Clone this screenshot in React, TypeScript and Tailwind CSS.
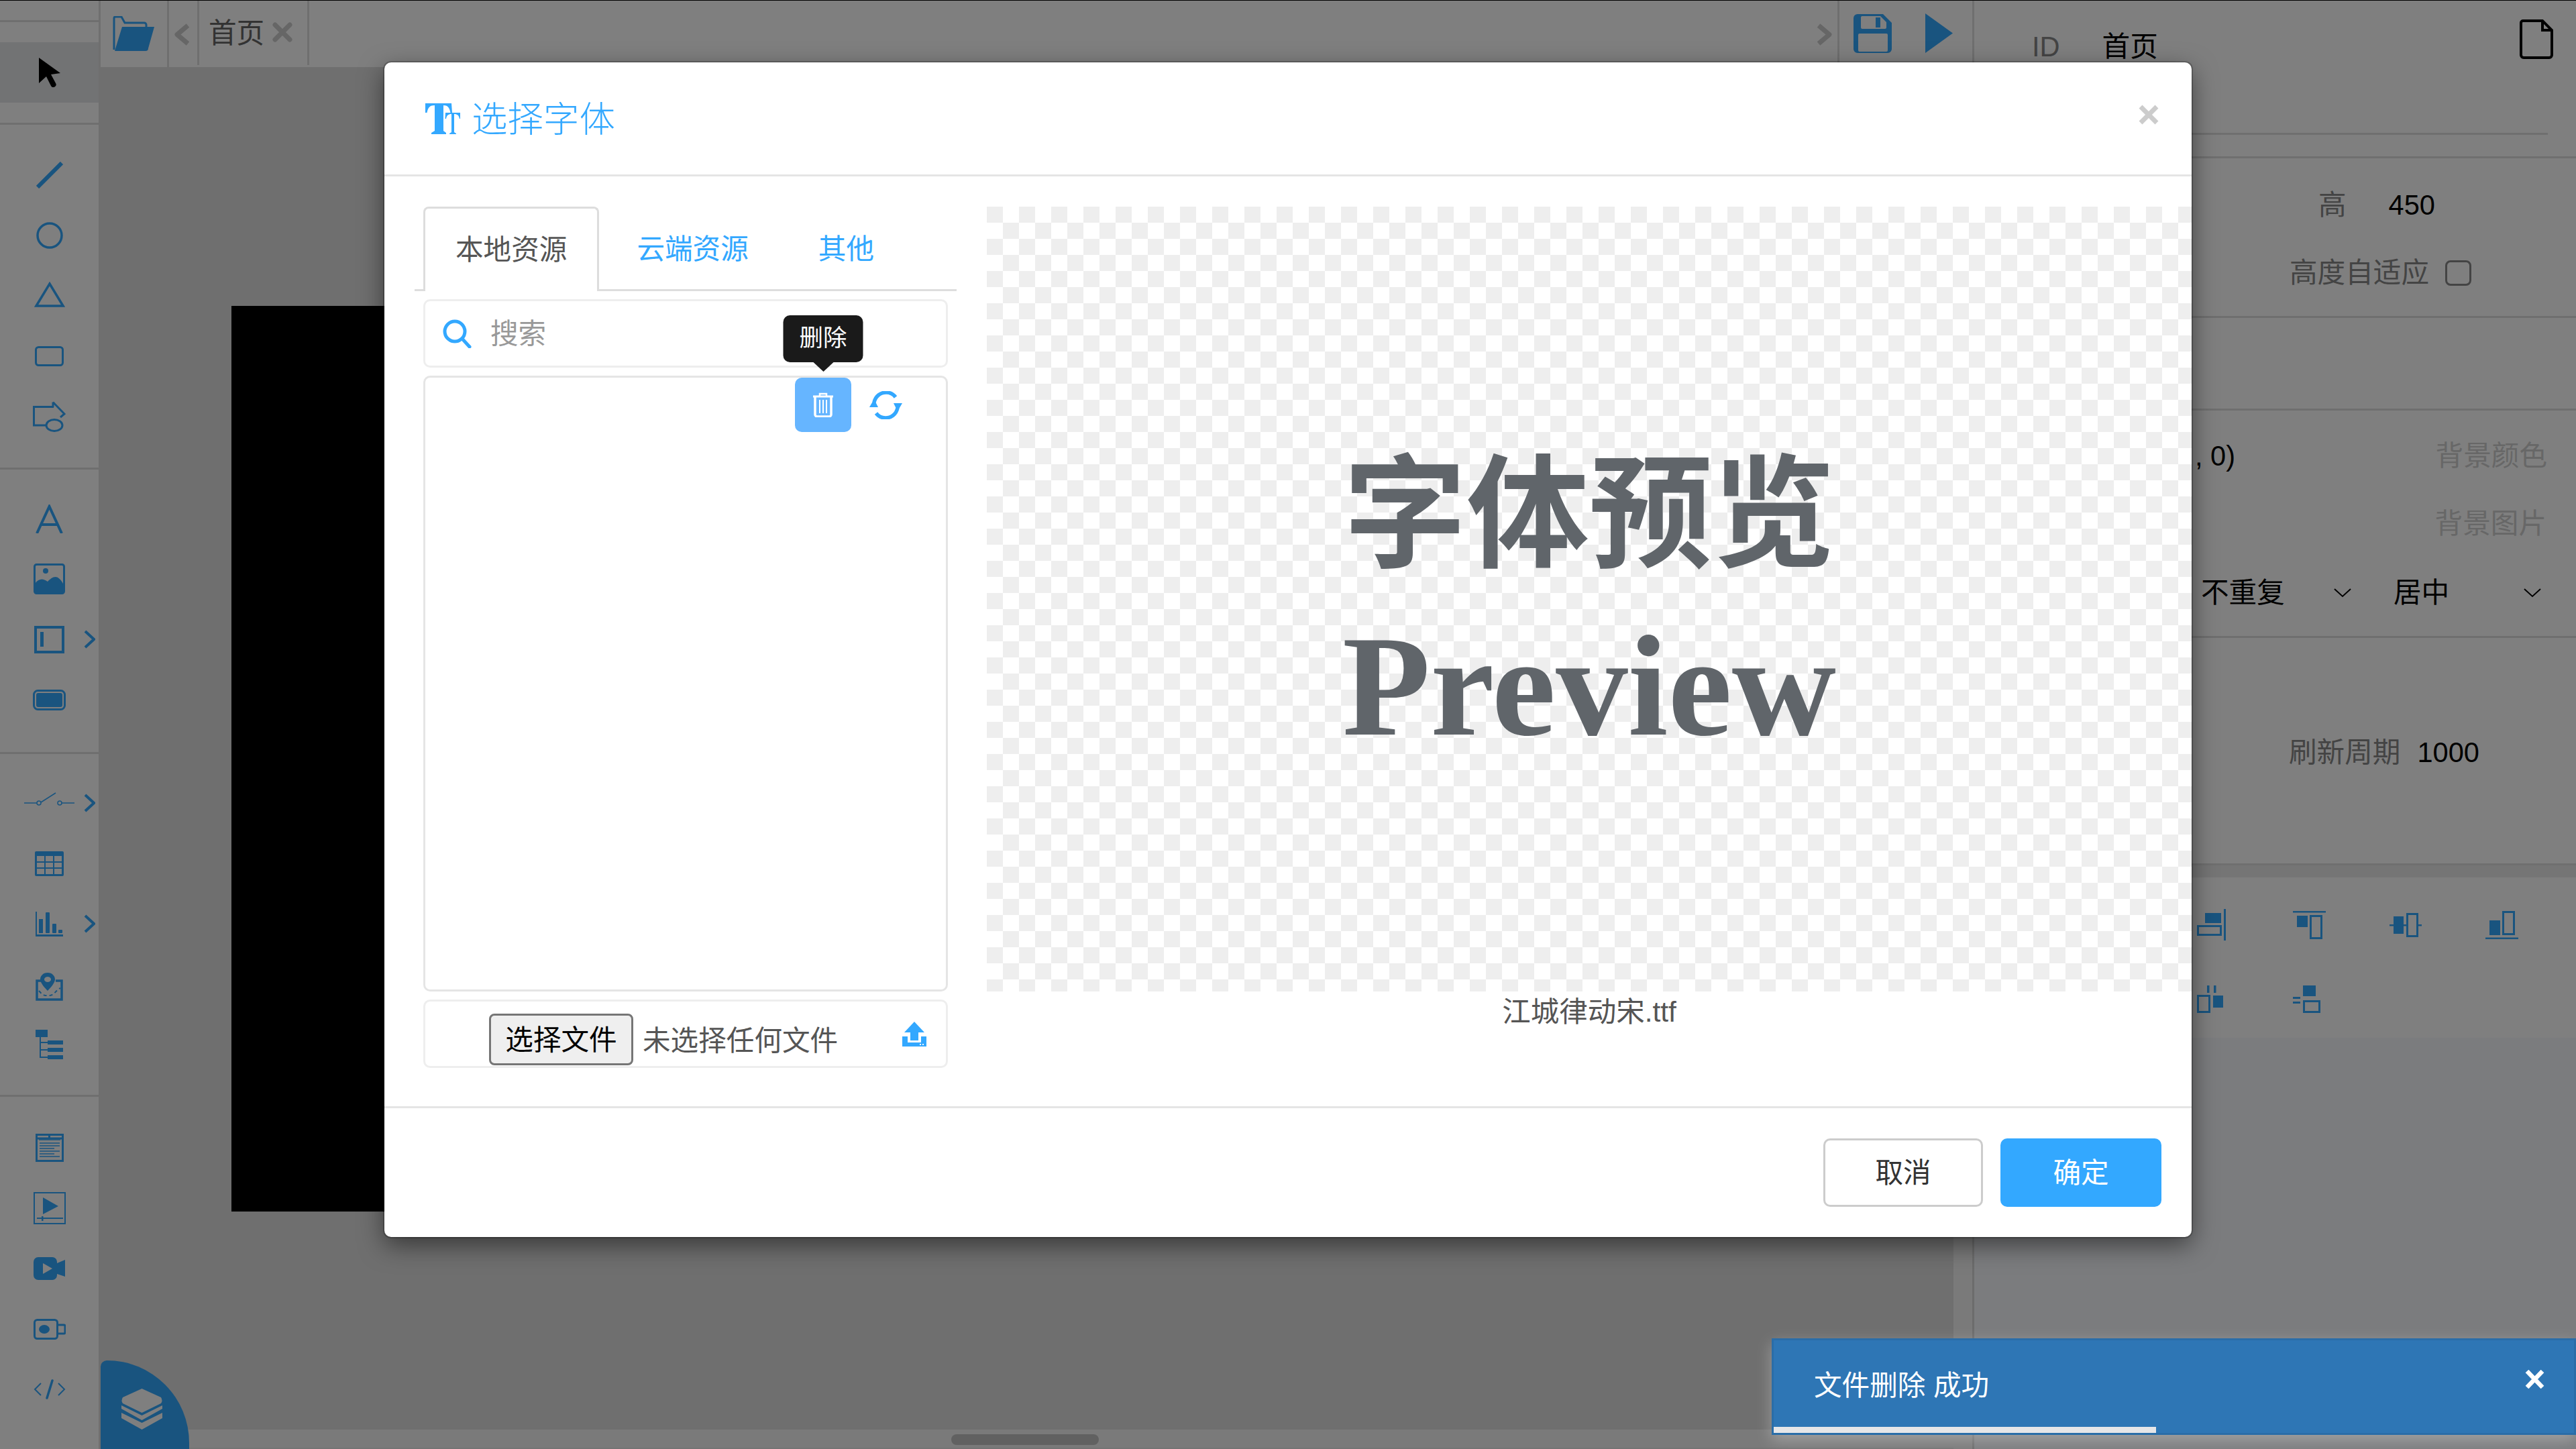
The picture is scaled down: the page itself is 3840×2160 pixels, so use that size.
import React from "react";

const B = "#33a8ff";
const FONT = '"Liberation Sans","Noto Sans CJK SC",sans-serif';

function Chevron() {
  return (
    <svg width="17" height="28" viewBox="0 0 17 28" fill="none" stroke={B} strokeWidth="4">
      <path d="M2 2 L15 14 L2 26" />
    </svg>
  );
}

function Row({ icon, more }: { icon: React.ReactNode; more?: boolean }) {
  return (
    <div className="grid h-[90px] grid-cols-[1fr_auto_1fr] items-center">
      <div />
      <div className="flex items-center justify-center">{icon}</div>
      <div className="flex justify-end pr-[5px]">{more ? <Chevron /> : null}</div>
    </div>
  );
}

const s2 = [
  <svg key="l" width="40" height="40" viewBox="0 0 40 40" fill="none" stroke={B} strokeWidth="6"><path d="M2 38 L38 2" /></svg>,
  <svg key="c" width="40" height="40" viewBox="0 0 40 40" fill="none" stroke={B} strokeWidth="3.5"><circle cx="20" cy="20" r="18" /></svg>,
  <svg key="t" className="mb-[4px]" width="46" height="38" viewBox="0 0 46 38" fill="none" stroke={B} strokeWidth="3.5"><path d="M23 3 L43 36 H3 Z" /></svg>,
  <svg key="r" width="43" height="30" viewBox="0 0 43 30" fill="none" stroke={B} strokeWidth="3"><rect x="1.5" y="1.5" width="40" height="27" rx="4" /></svg>,
  <svg key="s" width="49" height="46" viewBox="0 0 49 46" fill="none" stroke={B} strokeWidth="3">
    <path d="M31 8.5 H1.5 V36 H20" />
    <path d="M30 1.5 L47 19 L41 24 M30 1.5 V9" />
    <ellipse cx="32" cy="36" rx="12" ry="8.5" />
  </svg>,
];

const s3: [React.ReactNode, boolean?][] = [
  [<svg width="41" height="43" viewBox="0 0 41 43" fill="none" stroke={B} strokeWidth="4"><path d="M2 43 L20.5 3 L39 43 M8 30 H33" /></svg>],
  [<svg width="47" height="46" viewBox="0 0 47 46" fill="none">
    <rect x="1.5" y="1.5" width="44" height="43" rx="3" stroke={B} strokeWidth="3" />
    <circle cx="18" cy="11" r="4" fill={B} />
    <path d="M2 30 C8 22 14 22 21 27 C28 20 36 14 45 32 V44 H2 Z" fill={B} />
  </svg>],
  [<svg width="45" height="41" viewBox="0 0 45 41" fill="none">
    <rect x="2" y="2" width="41" height="37" stroke={B} strokeWidth="4" />
    <rect x="9" y="9" width="5" height="22" fill={B} />
  </svg>, true],
  [<svg width="49" height="31" viewBox="0 0 49 31" fill="none">
    <rect x="1.5" y="1.5" width="46" height="28" rx="6" stroke={B} strokeWidth="3" />
    <rect x="5" y="5" width="39" height="21" rx="3" fill={B} />
  </svg>],
];

const s4: [React.ReactNode, boolean?][] = [
  [<svg className="mb-[10px]" width="75" height="22" viewBox="0 0 75 22" fill="none" stroke={B} strokeWidth="1.5">
    <path d="M0 16 H19 M25 15 L47 1 M56 16 H75" />
    <circle cx="22" cy="16" r="3" />
    <circle cx="53" cy="16" r="3" />
  </svg>, true],
  [<svg width="43" height="37" viewBox="0 0 43 37">
    <path fillRule="evenodd" fill={B} d="M2 0 H41 a2 2 0 0 1 2 2 V35 a2 2 0 0 1-2 2 H2 a2 2 0 0 1-2-2 V2 a2 2 0 0 1 2-2 Z M3 7 V15 H14 V7 Z M16 7 V15 H27 V7 Z M29 7 V15 H40 V7 Z M3 17 V24 H14 V17 Z M16 17 V24 H27 V17 Z M29 17 V24 H40 V17 Z M3 26 V34 H14 V26 Z M16 26 V34 H27 V26 Z M29 26 V34 H40 V26 Z" />
  </svg>],
  [<svg width="41" height="37" viewBox="0 0 41 37" fill={B}>
    <path d="M0 0 H2 V34 H41 V37 H0 Z" />
    <rect x="5" y="11" width="6" height="21" />
    <rect x="15" y="1" width="6" height="31" rx="1" />
    <rect x="25" y="18" width="6" height="14" rx="1" />
    <rect x="34" y="27" width="6" height="5" rx="1" />
  </svg>, true],
  [<svg className="mt-[8px]" width="41" height="42" viewBox="0 0 41 42" fill="none">
    <path d="M11 12 H2 V40 H39 V12 H30" stroke={B} strokeWidth="3.5" />
    <path fillRule="evenodd" fill={B} d="M18 0 C25 0 29 5 29 10 C29 15 22 23 18 27 C14 23 7 15 7 10 C7 5 11 0 18 0 Z M18 6 a5 4 0 1 0 .01 0 Z" />
    <path d="M5 27 C12 35 14 34 20 34 C28 34 30 26 37 23" stroke={B} strokeWidth="2" strokeDasharray="5 4" />
  </svg>],
  [<svg width="41" height="44" viewBox="0 0 41 44" fill={B}>
    <rect x="0" y="0" width="18" height="11" />
    <rect x="18" y="16" width="23" height="6" />
    <rect x="18" y="27" width="23" height="6" />
    <rect x="18" y="38" width="23" height="6" />
    <path d="M6 11 H8 V18 H18 V20 H8 V29 H18 V31 H8 V40 H18 V42 H6 Z" />
  </svg>],
];

const s5: React.ReactNode[] = [
  <svg width="42" height="42" viewBox="0 0 42 42" fill="none">
    <rect x="1.5" y="1.5" width="39" height="39" stroke={B} strokeWidth="3" />
    <path d="M3 7 H39 M20.5 2 V8" stroke={B} strokeWidth="3" />
    <path d="M5 9 H37 M6 14 H36 M6 18 H36 M6 22 H28 M6 26 H36 M6 30 H28 M6 34 H36" stroke={B} strokeWidth="1.5" />
  </svg>,
  <svg width="48" height="48" viewBox="0 0 48 48" fill="none">
    <rect x="1" y="1" width="46" height="46" stroke={B} strokeWidth="2" />
    <path d="M14 8 L37 21 L14 33 Z" fill={B} />
    <path d="M5 39 H44" stroke={B} strokeWidth="2" />
    <rect x="12" y="36" width="2.5" height="7" fill={B} />
  </svg>,
  <svg width="47" height="34" viewBox="0 0 47 34">
    <path fillRule="evenodd" fill={B} d="M7 0 H28 a7 7 0 0 1 7 7 V9 L47 4 V29 L35 25 V27 a7 7 0 0 1-7 7 H7 a7 7 0 0 1-7-7 V7 a7 7 0 0 1 7-7 Z M14 9 V25 L28 17 Z" />
  </svg>,
  <svg width="48" height="31" viewBox="0 0 48 31" fill="none">
    <rect x="1.5" y="1.5" width="34" height="28" rx="4" stroke={B} strokeWidth="3" />
    <ellipse cx="16" cy="15.5" rx="8" ry="6.5" fill={B} />
    <path d="M36 9 H45 a2 2 0 0 1 2 2 V20 a2 2 0 0 1-2 2 H36" stroke={B} strokeWidth="3" />
  </svg>,
  <svg width="48" height="30" viewBox="0 0 48 30" fill="none" stroke={B}>
    <path d="M11 6 L2 15 L11 24 M37 6 L46 15 L37 24" strokeWidth="2" />
    <path d="M28 2 L20 28" strokeWidth="3.5" strokeLinecap="round" />
  </svg>,
];

function Sidebar() {
  const line = "h-[3px] bg-[#dedede]";
  return (
    <aside className="flex h-full w-[150px] shrink-0 flex-col border-r-[3px] border-[#dedede] bg-white">
      <div className="h-[29px]" />
      <div className={line} />
      <div className="h-[30px]" />
      <div className="flex h-[90px] items-center justify-center bg-[#e4e6e8]">
        <svg width="32" height="44" viewBox="0 0 32 44" fill="#000">
          <path d="M0 0 L32 23 L18 25 L25 38 a4 4 0 0 1-7 4 L11 28 L0 38 Z" />
        </svg>
      </div>
      <div className="h-[30px]" />
      <div className={line} />
      <div className="h-[30px]" />
      {s2.map((ic, i) => <Row key={i} icon={ic} />)}
      <div className="h-[31px]" />
      <div className={line} />
      <div className="h-[28px]" />
      {s3.map((r, i) => <Row key={i} icon={r[0]} more={r[1]} />)}
      <div className="h-[33px]" />
      <div className={line} />
      <div className="h-[28px]" />
      {s4.map((r, i) => <Row key={i} icon={r[0]} more={r[1]} />)}
      <div className="h-[30px]" />
      <div className={line} />
      <div className="h-[31px]" />
      {s5.map((ic, i) => <Row key={i} icon={ic} />)}
    </aside>
  );
}

function TabBar() {
  return (
    <div className="flex h-[99px] shrink-0 items-start bg-white">
      <div className="flex h-[99px] w-[102px] items-start justify-start border-r-[3px] border-[#dedede] pl-[18px] pt-[23px]">
        <svg width="62" height="52" viewBox="0 0 62 52" fill="none">
          <path d="M2 50 V3 a2 2 0 0 1 2-2 H13 l5 9 H47 a3 3 0 0 1 3 3 V16" stroke={B} strokeWidth="3" />
          <path d="M14 16 H62 L53 48 a4 4 0 0 1-4 4 H3 Z" fill={B} />
        </svg>
      </div>
      <div className="flex h-[96px] w-[45px] items-start border-r-[3px] border-[#dedede] pl-[7px] pt-[34px]">
        <svg width="24" height="33" viewBox="0 0 24 33" fill="none" stroke="#ccc" strokeWidth="7" strokeLinejoin="round">
          <path d="M21 3 L5 16.5 L21 30" />
        </svg>
      </div>
      <div className="flex h-[96px] w-[164px] items-start border-r-[3px] border-[#dedede] pl-[14px] pt-[26px]">
        <span className="text-[41.6px] leading-[46px] text-[#666]">首页</span>
        <svg className="ml-[12px] mt-[6px]" width="30" height="30" viewBox="0 0 30 30" fill="none" stroke="#ccc" strokeWidth="7" strokeLinecap="round">
          <path d="M4 4 L26 26 M26 4 L4 26" />
        </svg>
      </div>
      <div className="flex-1" />
      <div className="flex h-[92px] w-[42px] items-start border-r-[3px] border-[#dedede] pl-[0px] pt-[34px]">
        <svg className="ml-[8px]" width="24" height="33" viewBox="0 0 24 33" fill="none" stroke="#ccc" strokeWidth="7" strokeLinejoin="round">
          <path d="M3 3 L19 16.5 L3 30" />
        </svg>
      </div>
      <div className="flex h-[92px] w-[201px] items-start border-r-[3px] border-[#dedede] pl-[21px] pt-[19px]">
        <svg className="mt-[1px]" width="57" height="58" viewBox="0 0 57 58">
          <path fillRule="evenodd" fill={B} d="M6 0 H44 L57 13 V52 a6 6 0 0 1-6 6 H6 a6 6 0 0 1-6-6 V6 a6 6 0 0 1 6-6 Z M13 3 a2 2 0 0 0-2 2 V20 a2 2 0 0 0 2 2 H47 a2 2 0 0 0 2-2 V12 L40 3 Z M33 5 H40 V20 H33 Z M9 29 a2 2 0 0 0-2 2 V54 a2 2 0 0 0 2 2 H49 a2 2 0 0 0 2-2 V31 a2 2 0 0 0-2-2 Z" />
        </svg>
        <svg className="ml-[50px]" width="41" height="59" viewBox="0 0 41 59" fill={B}>
          <path d="M0 0 L41 29.5 L0 59 Z" />
        </svg>
      </div>
    </div>
  );
}

function Canvas() {
  return (
    <div className="flex min-h-0 flex-1">
      <div className="relative flex min-w-0 flex-1 flex-col bg-[#dfdfdf]">
        <div className="relative min-h-0 flex-1 pl-[195px] pt-[356px]">
          <div className="h-[1350px] w-[1350px] bg-black" />
        </div>
        <div className="flex h-[29px] shrink-0 items-start border-b-[2px] border-[#e8e8e8] bg-[#f5f5f5] pl-[1268px] pt-[7px]">
          <div className="h-[16px] w-[220px] rounded-full bg-[#c2c2c2]" />
        </div>
        <div className="absolute bottom-0 left-0 flex h-[132px] w-[132px] items-end justify-start rounded-tl-[10px] rounded-tr-[100%] bg-[#33a8ff] pb-[29px] pl-[30px]">
          <svg width="63" height="61" viewBox="0 0 63 61" fill="#fff">
            <path d="M31.5 0 L60 13 Q63 18 60 22 L31.5 36 L3 22 Q0 18 3 13 Z" />
            <path d="M1 25 L31.5 40 L62 25 V30 L31.5 47 L1 30 Z" />
            <path d="M1 36 L31.5 51 L62 36 V44 L31.5 61 L1 44 Z" />
          </svg>
        </div>
      </div>
      <div className="w-[31px] shrink-0 border-r-[3px] border-[#d8d8d8] bg-[#f5f5f5]" />
    </div>
  );
}

function Value({ children }: { children: React.ReactNode }) {
  return <span className="text-[41.6px] leading-[42px] text-black">{children}</span>;
}
function Label({ children, soft }: { children: React.ReactNode; soft?: boolean }) {
  return <span className={`text-[41.6px] leading-[42px] ${soft ? "text-[#cfcfcf]" : "text-[#888]"}`}>{children}</span>;
}

function SelectChevron() {
  return (
    <svg width="26" height="14" viewBox="0 0 26 14" fill="none" stroke="#000" strokeWidth="2">
      <path d="M1 1 L13 12 L25 1" />
    </svg>
  );
}

const alignIcons: React.ReactNode[] = [
  <svg width="43" height="47" viewBox="0 0 43 47" fill={B}>
    <rect x="40" y="0" width="3" height="47" />
    <rect x="12" y="6" width="24" height="15" />
    <rect x="1.5" y="25.5" width="34" height="13" fill="none" stroke={B} strokeWidth="3" />
  </svg>,
  <svg width="49" height="42" viewBox="0 0 49 42" fill={B}>
    <rect x="0" y="0" width="49" height="2.5" />
    <rect x="6" y="7" width="16" height="17" />
    <rect x="26.5" y="7.5" width="16" height="33" fill="none" stroke={B} strokeWidth="3" />
  </svg>,
  <svg width="48" height="36" viewBox="0 0 48 36" fill={B}>
    <rect x="0" y="17" width="6" height="2.5" />
    <rect x="42" y="17" width="6" height="2.5" />
    <rect x="21" y="17" width="5" height="2.5" />
    <rect x="6" y="5" width="15" height="26" />
    <rect x="26.5" y="1.5" width="15" height="33" fill="none" stroke={B} strokeWidth="3" />
  </svg>,
  <svg width="49" height="42" viewBox="0 0 49 42" fill={B}>
    <rect x="0" y="39.5" width="49" height="2.5" />
    <rect x="6" y="14" width="16" height="22" />
    <rect x="26.5" y="1.5" width="16" height="33" fill="none" stroke={B} strokeWidth="3" />
  </svg>,
  <svg width="39" height="41" viewBox="0 0 39 41" fill={B}>
    <rect x="1.5" y="15.5" width="17" height="24" fill="none" stroke={B} strokeWidth="3" />
    <rect x="15" y="0" width="3.5" height="11" />
    <rect x="25" y="0" width="3.5" height="11" />
    <rect x="24" y="15" width="15" height="18" />
  </svg>,
  <svg width="41" height="41" viewBox="0 0 41 41" fill={B}>
    <rect x="0" y="17" width="11" height="3" />
    <rect x="0" y="24" width="11" height="3" />
    <rect x="15" y="0" width="19" height="16" />
    <rect x="16.5" y="23.5" width="23" height="16" fill="none" stroke={B} strokeWidth="3" />
  </svg>,
];

function RightPanel() {
  return (
    <aside className="flex h-full min-w-0 flex-1 flex-col bg-[#f6f8fc]">
      <section className="h-[235px] border-b-[3px] border-[#dedede] bg-white">
        <div className="flex items-start pl-[86px] pr-[34px] pt-[28px]">
          <span className="mt-[20px]"><Label>ID</Label></span>
          <span className="ml-[63px] mt-[20px]"><Value>首页</Value></span>
          <svg className="ml-auto" width="50" height="59" viewBox="0 0 50 59" fill="none" stroke="#000" strokeWidth="4">
            <path d="M5 2 H34 L48 16 V53 a4 4 0 0 1-4 4 H6 a4 4 0 0 1-4-4 V5 a3 3 0 0 1 3-3 Z M34 2 V16 H48" />
          </svg>
        </div>
        <div className="ml-[0px] mr-[42px] mt-[107px] h-[3px] bg-[#dedede]" />
      </section>
      <section className="h-[238px] border-b-[3px] border-[#dedede] bg-white pt-[49px]">
        <div className="flex items-center pl-[513px]">
          <Label>高</Label>
          <span className="ml-[63px]"><Value>450</Value></span>
        </div>
        <div className="mt-[59px] flex items-center pl-[470px]">
          <Label>高度自适应</Label>
          <span className="ml-[24px] block h-[38px] w-[39px] rounded-[8px] border-[3px] border-[#888]" />
        </div>
      </section>
      <section className="h-[138px] border-b-[3px] border-[#dedede] bg-white" />
      <section className="h-[339px] border-b-[3px] border-[#dedede] bg-white pt-[47px]">
        <div className="flex items-center justify-between pl-[329px] pr-[43px]">
          <Value>, 0)</Value>
          <Label soft>背景颜色</Label>
        </div>
        <div className="mt-[59px] flex justify-end pr-[44px]">
          <Label soft>背景图片</Label>
        </div>
        <div className="mt-[61px] flex items-center pl-[338px]">
          <span className="w-[198px]"><Value>不重复</Value></span>
          <SelectChevron />
          <span className="ml-[63px] w-[194px]"><Value>居中</Value></span>
          <SelectChevron />
        </div>
      </section>
      <section className="flex h-[339px] items-start border-b-[3px] border-[#dedede] bg-white pl-[469px] pt-[150px]">
        <Label>刷新周期</Label>
        <span className="ml-[25px]"><Value>1000</Value></span>
      </section>
      <div className="h-[18px] bg-[#eaeaea]" />
      <section className="h-[239px] bg-white pl-[332px] pt-[47px]">
        <div className="grid grid-cols-[143px_144px_143px_60px] items-center">
          {alignIcons.slice(0, 4).map((ic, i) => <div key={i}>{ic}</div>)}
        </div>
        <div className="mt-[67px] grid grid-cols-[143px_60px] items-center">
          {alignIcons.slice(4).map((ic, i) => <div key={i}>{ic}</div>)}
        </div>
      </section>
    </aside>
  );
}

function Modal() {
  return (
    <div className="h-[1751px] w-[2694px] overflow-hidden rounded-[10px] bg-white shadow-[0_0_0_2px_rgba(0,0,0,0.2),0_12px_37px_rgba(0,0,0,0.5)]">
      <header className="flex h-[170px] items-center justify-between border-b-[3px] border-[#e5e5e5] pl-[61px] pr-[49px]">
        <div className="flex items-center">
          <svg width="52" height="46" viewBox="0 0 52 46" fill={B}>
            <path d="M0 0 H39 L40 14 H37.5 C36 6 33 3 27 3 V41 L31 44 V46 H9 V44 L14 41 V3 C7 3 4 6 2.5 14 H0 Z" />
            <path d="M30 14 H52 L52.5 23 H51 C50 18 48 16 43 16 V43 L46 45 V46 H36 V45 L39 43 V16 C34 16 32 18 31 23 H29.5 Z" />
          </svg>
          <h1 className="ml-[17px] pt-[4px] text-[53.5px] font-light leading-[60px] text-[#33a8ff]">选择字体</h1>
        </div>
        <svg className="-mt-[12px]" width="30" height="30" viewBox="0 0 30 30" fill="none" stroke="#ccc" strokeWidth="7">
          <path d="M3 3 L27 27 M27 3 L3 27" />
        </svg>
      </header>

      <div className="flex h-[1389px] border-b-[3px] border-[#e5e5e5] pt-[45px]">
        <div className="ml-[45px] w-[808px] shrink-0">
          <div className="flex h-[126px] items-end gap-[8px] border-b-[3px] border-[#ddd] pl-[13px]">
            <div className="-mb-[3px] flex h-[126px] items-center rounded-t-[8px] border-[3px] border-b-0 border-[#ddd] bg-white px-[45px] pt-[2px] text-[41.6px] text-[#555]">本地资源</div>
            <div className="flex h-[123px] items-center px-[48px] pt-[5px] text-[41.6px] text-[#33a8ff]">云端资源</div>
            <div className="flex h-[123px] items-center px-[48px] pt-[5px] text-[41.6px] text-[#33a8ff]">其他</div>
          </div>

          <div className="ml-[13px] mt-[12px] flex h-[102px] w-[782px] items-center rounded-[10px] border-[3px] border-[#eee] pl-[26px]">
            <svg width="43" height="43" viewBox="0 0 43 43" fill="none" stroke={B} strokeWidth="5">
              <circle cx="18" cy="18" r="15" />
              <path d="M29 29 L40 41" strokeLinecap="round" />
            </svg>
            <span className="ml-[28px] pt-[2px] text-[41.6px] leading-[42px] text-[#999]">搜索</span>
          </div>

          <div className="ml-[13px] mt-[12px] flex h-[918px] w-[782px] items-start justify-end rounded-[10px] border-[3px] border-[#e5e5e5] pr-[65px]">
            <div className="relative flex h-[81px] w-[84px] items-center justify-center rounded-[10px] bg-[#66b5ff]">
              <svg width="32" height="37" viewBox="0 0 32 37" fill="none" stroke="#fff">
                <path d="M1 6 H31" strokeWidth="3" />
                <path d="M11 5 V2 H21 V5" strokeWidth="2.5" />
                <path d="M4 7 V33 a3 3 0 0 0 3 3 H25 a3 3 0 0 0 3-3 V7" strokeWidth="3.5" />
                <path d="M11 11 V31 M16 11 V31 M21 11 V31" strokeWidth="2" />
              </svg>
              <div className="absolute bottom-[calc(100%+23px)] left-1/2 flex h-[70px] w-[119px] -translate-x-1/2 items-center justify-center rounded-[10px] bg-[#1a1a1a] text-[35.5px] text-white">
                删除
                <span className="absolute left-1/2 top-full -ml-[15px] h-0 w-0 border-x-[15px] border-t-[14px] border-x-transparent border-t-[#1a1a1a]" />
              </div>
            </div>
            <svg className="ml-[27px] mt-[20px]" width="49" height="42" viewBox="0 0 49 42" fill="none">
              <path d="M7 17 C9 7 17 2 25 2 C32 2 36 5 39 9" stroke={B} strokeWidth="5.5" />
              <path d="M42 25 C40 35 32 40 24 40 C17 40 13 37 10 33" stroke={B} strokeWidth="5.5" />
              <path d="M0 24 L7 12 L13 24 Z" fill={B} />
              <path d="M36 18 L49 18 L42 30 Z" fill={B} />
            </svg>
          </div>

          <div className="ml-[13px] mt-[12px] flex h-[102px] w-[782px] items-start rounded-[10px] border-[3px] border-[#eee] pl-[95px] pr-[29px] pt-[18px]">
            <button className="flex h-[77px] w-[215px] items-center justify-center rounded-[8px] border-[3px] border-[#767676] bg-[#efefef] pt-[3px] text-[41.6px] leading-none text-black">选择文件</button>
            <span className="ml-[14px] pt-[2px] text-[41.6px] leading-[77px] text-[#555]">未选择任何文件</span>
            <svg className="ml-auto mt-[12px]" width="36" height="37" viewBox="0 0 36 37" fill={B}>
              <path d="M18 0 L33 16 H24 V28 H12 V16 H3 Z" />
              <path fillRule="evenodd" d="M0 22 H8 V31 H28 V22 H36 V37 H0 Z M26 33 V35 H28 V33 Z M30 33 V35 H32 V33 Z" />
            </svg>
          </div>
        </div>

        <div className="ml-[45px] flex min-w-0 flex-1 flex-col">
          <div className="flex h-[1170px] flex-col items-center justify-center bg-[conic-gradient(#fff_25%,#eee_0_50%,#fff_0_75%,#eee_0)] bg-[length:48px_48px] pt-[5px] text-[#60656a]">
            <div className="text-[183px] font-bold leading-[260px]">字体预览</div>
            <div className="-mt-[5px] font-['Liberation_Serif',serif] text-[215px] font-bold leading-[260px]">Preview</div>
          </div>
          <div className="mt-[10px] text-center text-[42.5px] leading-[42px] text-[#555]">江城律动宋.ttf</div>
        </div>
      </div>

      <footer className="flex h-[192px] items-start justify-end gap-[26px] pr-[45px] pt-[45px]">
        <button className="flex h-[102px] w-[238px] items-center justify-center rounded-[10px] border-[3px] border-[#ccc] bg-white pt-[3px] text-[41.6px] text-[#333]">取消</button>
        <button className="flex h-[102px] w-[240px] items-center justify-center rounded-[10px] bg-[#33a8ff] pt-[3px] text-[41.6px] text-white">确定</button>
      </footer>
    </div>
  );
}

function Toast() {
  return (
    <div className="absolute bottom-[21px] right-0 flex h-[144px] w-[1199px] flex-col justify-between border-[3px] border-[#2a6da8] bg-[#2e76b5] shadow-[0_8px_22px_rgba(255,255,255,0.3)]">
      <div className="flex items-start justify-between pl-[60px] pr-[44px] pt-[47px]">
        <span className="text-[41.6px] leading-[42px] text-white">文件删除 成功</span>
        <svg className="-mt-[3px]" width="29" height="28" viewBox="0 0 29 28" fill="none" stroke="#fff" strokeWidth="6.5">
          <path d="M3 2 L26 26 M26 2 L3 26" />
        </svg>
      </div>
      <div className="h-[9px] w-[570px] bg-[#e6e6e8]" />
    </div>
  );
}

export default function App() {
  return (
    <div className="relative h-[2160px] w-[3840px] overflow-hidden bg-white" style={{ fontFamily: FONT }}>
      <div className="h-[1px] bg-black" />
      <div className="flex h-[2159px]">
        <Sidebar />
        <main className="flex h-full w-[2793px] shrink-0 flex-col">
          <TabBar />
          <Canvas />
        </main>
        <RightPanel />
      </div>
      <div className="absolute inset-0 flex justify-center bg-black/50 pt-[93px]">
        <Modal />
      </div>
      <Toast />
    </div>
  );
}
